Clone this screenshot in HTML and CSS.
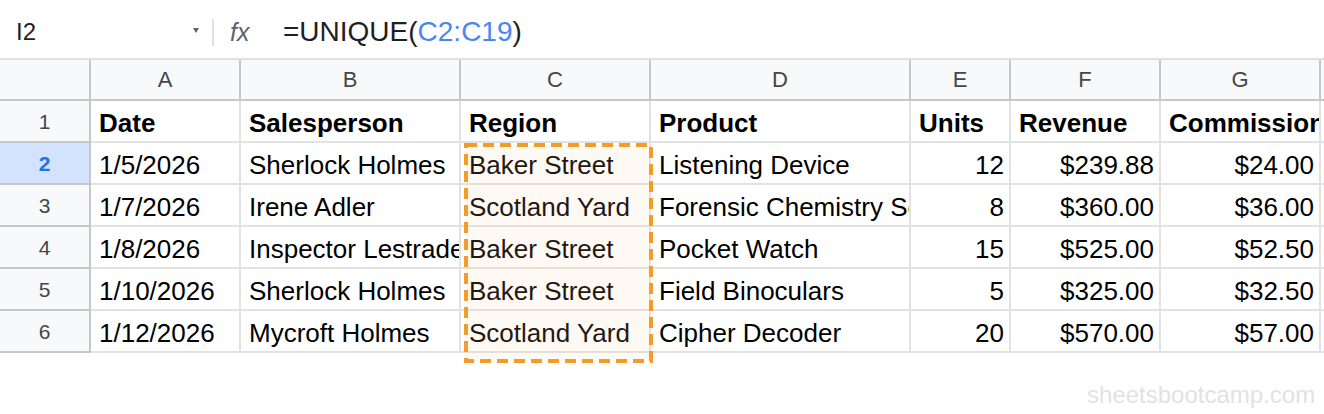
FILE: index.html
```html
<!DOCTYPE html>
<html lang="en">

<head>
    <meta charset="UTF-8">
    <meta name="viewport" content="width=device-width, initial-scale=1.0">
    <title>UNIQUE function</title>
    <link rel="stylesheet" href="styles.css">
</head>

<body>
    <div class="formula_bar">
        <div class="name_box">
            <span class="cell_ref">I2</span>
            <span class="caret"></span>
        </div>
        <div class="divider"></div>
        <div class="fx">fx</div>
        <div class="formula">=UNIQUE(<span class="range">C2:C19</span>)</div>
    </div>

    <div class="grid">
        <div class="corner"></div>
        <div class="col_head">A</div>
        <div class="col_head">B</div>
        <div class="col_head">C</div>
        <div class="col_head">D</div>
        <div class="col_head">E</div>
        <div class="col_head">F</div>
        <div class="col_head">G</div>
        <div class="col_head"></div>

        <div class="row_head">1</div>
        <div class="cell bold">Date</div>
        <div class="cell bold">Salesperson</div>
        <div class="cell bold">Region</div>
        <div class="cell bold">Product</div>
        <div class="cell bold">Units</div>
        <div class="cell bold">Revenue</div>
        <div class="cell bold">Commission</div>
        <div class="cell"></div>

        <div class="row_head active">2</div>
        <div class="cell">1/5/2026</div>
        <div class="cell">Sherlock Holmes</div>
        <div class="cell">Baker Street</div>
        <div class="cell">Listening Device</div>
        <div class="cell num">12</div>
        <div class="cell num">$239.88</div>
        <div class="cell num">$24.00</div>
        <div class="cell"></div>

        <div class="row_head">3</div>
        <div class="cell">1/7/2026</div>
        <div class="cell">Irene Adler</div>
        <div class="cell">Scotland Yard</div>
        <div class="cell">Forensic Chemistry Set</div>
        <div class="cell num">8</div>
        <div class="cell num">$360.00</div>
        <div class="cell num">$36.00</div>
        <div class="cell"></div>

        <div class="row_head">4</div>
        <div class="cell">1/8/2026</div>
        <div class="cell">Inspector Lestrade</div>
        <div class="cell">Baker Street</div>
        <div class="cell">Pocket Watch</div>
        <div class="cell num">15</div>
        <div class="cell num">$525.00</div>
        <div class="cell num">$52.50</div>
        <div class="cell"></div>

        <div class="row_head">5</div>
        <div class="cell">1/10/2026</div>
        <div class="cell">Sherlock Holmes</div>
        <div class="cell">Baker Street</div>
        <div class="cell">Field Binoculars</div>
        <div class="cell num">5</div>
        <div class="cell num">$325.00</div>
        <div class="cell num">$32.50</div>
        <div class="cell"></div>

        <div class="row_head">6</div>
        <div class="cell">1/12/2026</div>
        <div class="cell">Mycroft Holmes</div>
        <div class="cell">Scotland Yard</div>
        <div class="cell">Cipher Decoder</div>
        <div class="cell num">20</div>
        <div class="cell num">$570.00</div>
        <div class="cell num">$57.00</div>
        <div class="cell"></div>
    </div>

    <!-- dashed marquee round C2:C6 -->
    <svg class="marquee" width="189" height="220" viewBox="0 0 189 220">
        <rect x="2" y="2" width="185" height="216" fill="rgba(255,205,155,0.12)" stroke="#f59b2a"
            stroke-width="4" stroke-dasharray="11 6"></rect>
    </svg>

    <div class="watermark">sheetsbootcamp.com</div>
</body>

</html>
```

FILE: styles.css
```css
* {
    margin: 0px;
    padding: 0px;
    box-sizing: border-box;
}

html,
body {
    height: 100%;
}

body {
    position: relative;
    background-color: white;
    font-family: "Liberation Sans", Arial, sans-serif;
    color: #000;
    overflow: hidden;
}

.formula_bar {
    display: flex;
    align-items: center;
    height: 60px;
    padding-top: 6px;
    border-bottom: 2px solid #e1e1e1;
}

.name_box {
    display: flex;
    align-items: center;
    justify-content: space-between;
    width: 212px;
    padding: 0 13px 0 16px;
}

.cell_ref {
    font-size: 24px;
    color: #1f1f1f;
}

.caret {
    width: 0;
    height: 0;
    border-left: 3.5px solid transparent;
    border-right: 3.5px solid transparent;
    border-top: 5px solid #5f6368;
    margin-top: -3px;
}

.divider {
    width: 2px;
    height: 27px;
    background-color: #e1e1e1;
}

.fx {
    font-size: 25px;
    font-style: italic;
    color: #5f6368;
    margin-left: 16px;
    width: 53px;
}

.formula {
    font-size: 28px;
    color: #1f1f1f;
    white-space: nowrap;
}

.range {
    color: #4a86f0;
}

.grid {
    display: grid;
    grid-template-columns: 91px 150px 220px 190px 260px 100px 150px 160px 1fr;
    grid-auto-rows: 42px;
    grid-template-rows: 41px;
}

.corner,
.col_head {
    background-color: #f8f9fa;
    border-right: 2px solid #c7c7c7;
    border-bottom: 2px solid #c7c7c7;
}

.col_head {
    font-size: 22px;
    color: #444746;
    text-align: center;
    line-height: 39px;
}

.row_head {
    background-color: #f8f9fa;
    border-right: 2px solid #c7c7c7;
    border-bottom: 2px solid #c7c7c7;
    font-size: 21px;
    color: #444746;
    text-align: center;
    padding-top: 2px;
    line-height: 38px;
}

.row_head.active {
    background-color: #d3e3fd;
    color: #1a73e8;
    font-weight: bold;
}

.cell {
    border-right: 2px solid #e2e2e2;
    border-bottom: 2px solid #e2e2e2;
    font-size: 26px;
    line-height: 29px;
    padding: 8px 5px 0 8px;
    white-space: nowrap;
    overflow: hidden;
}

.bold {
    font-weight: bold;
}

.num {
    text-align: right;
}

.marquee {
    position: absolute;
    display: block;
    left: 464px;
    top: 143px;
    width: 189px;
    height: 220px;
}

.watermark {
    position: absolute;
    left: 1087px;
    top: 383px;
    font-size: 24px;
    line-height: 24px;
    color: #e2e2e2;
}
```
